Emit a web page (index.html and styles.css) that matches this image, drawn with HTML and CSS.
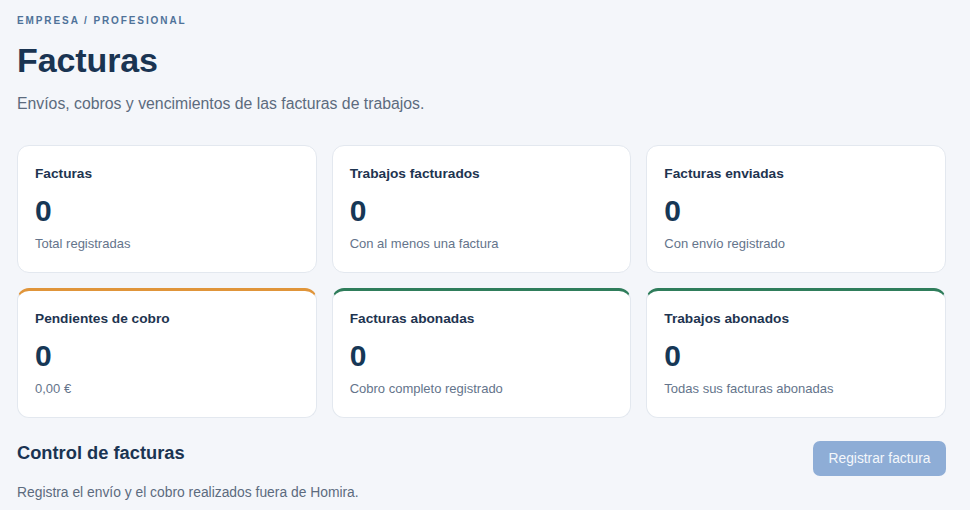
FILE: index.html
```html
<!DOCTYPE html>
<html lang="es">
<head>
<meta charset="utf-8">
<title>Facturas</title>
<link rel="stylesheet" href="styles.css">
</head>
<body>
<main class="page">
  <header class="head">
    <div class="crumb">EMPRESA / PROFESIONAL</div>
    <h1 class="title">Facturas</h1>
    <p class="lead">Envíos, cobros y vencimientos de las facturas de trabajos.</p>
  </header>

  <section class="stats">
    <div class="card">
      <div class="card-title">Facturas</div>
      <div class="card-num">0</div>
      <div class="card-sub">Total registradas</div>
    </div>
    <div class="card">
      <div class="card-title">Trabajos facturados</div>
      <div class="card-num">0</div>
      <div class="card-sub">Con al menos una factura</div>
    </div>
    <div class="card">
      <div class="card-title">Facturas enviadas</div>
      <div class="card-num">0</div>
      <div class="card-sub">Con envío registrado</div>
    </div>
    <div class="card card-warn">
      <div class="card-title">Pendientes de cobro</div>
      <div class="card-num">0</div>
      <div class="card-sub">0,00 €</div>
    </div>
    <div class="card card-ok">
      <div class="card-title">Facturas abonadas</div>
      <div class="card-num">0</div>
      <div class="card-sub">Cobro completo registrado</div>
    </div>
    <div class="card card-ok">
      <div class="card-title">Trabajos abonados</div>
      <div class="card-num">0</div>
      <div class="card-sub">Todas sus facturas abonadas</div>
    </div>
  </section>

  <section class="control">
    <div class="control-row">
      <h2 class="control-title">Control de facturas</h2>
      <button class="btn" type="button">Registrar factura</button>
    </div>
    <p class="control-sub">Registra el envío y el cobro realizados fuera de Homira.</p>
  </section>
</main>
</body>
</html>
```

FILE: styles.css
```css
html, body {
  margin: 0;
  padding: 0;
  background: #f4f6fa;
  font-family: "Liberation Sans", Arial, sans-serif;
}

.page {
  padding: 15px 24px 0 17px;
}

.crumb {
  font-size: 10px;
  line-height: 12px;
  font-weight: 700;
  letter-spacing: 1.9px;
  color: #4f7299;
}

.title {
  margin: 13px 0 0;
  font-size: 34px;
  line-height: 40px;
  font-weight: 700;
  color: #1a3452;
  letter-spacing: -0.1px;
}

.lead {
  margin: 15px 0 0;
  font-size: 15.8px;
  line-height: 18px;
  color: #5c6b7e;
}

.stats {
  margin-top: 32px;
  display: grid;
  grid-template-columns: repeat(3, 1fr);
  gap: 15px;
}

.card {
  background: #ffffff;
  border: 1px solid #e3e8ef;
  border-radius: 12px;
  padding: 20px 17px 20px;
}

.card-warn {
  border-top: 3px solid #e0953a;
}

.card-ok {
  border-top: 3px solid #2f7d5b;
}

.card-title {
  font-size: 13.7px;
  line-height: 16px;
  font-weight: 700;
  color: #1e3450;
}

.card-num {
  margin-top: 12px;
  font-size: 30px;
  line-height: 34px;
  font-weight: 700;
  color: #163756;
}

.card-sub {
  margin-top: 8px;
  font-size: 13px;
  line-height: 16px;
  color: #64748b;
}

.control {
  margin-top: 23px;
}

.control-row {
  display: flex;
  justify-content: space-between;
  align-items: flex-start;
}

.control-title {
  margin: 1px 0 0;
  font-size: 18.3px;
  line-height: 22px;
  font-weight: 700;
  color: #1a3452;
}

.btn {
  width: 133px;
  height: 35px;
  border: none;
  border-radius: 7px;
  background: #8eadd6;
  color: #f4f7fb;
  font-family: "Liberation Sans", Arial, sans-serif;
  font-size: 13.8px;
  padding: 0;
}

.control-sub {
  margin: 8px 0 0;
  font-size: 13.85px;
  line-height: 16px;
  color: #5c6b7e;
}
```
